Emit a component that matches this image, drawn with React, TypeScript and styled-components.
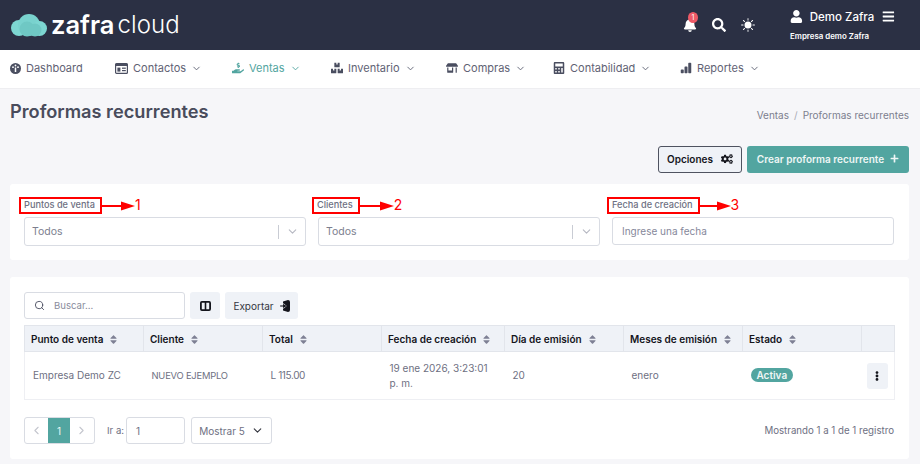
import React from "react";
import styled, { createGlobalStyle } from "styled-components";
import {
  FaHandHoldingUsd, FaBoxes, FaStoreAlt, FaCalculator,
  FaBell, FaSearch, FaUser, FaBars, FaCogs, FaPlus, FaEllipsisV, FaSort,
} from "react-icons/fa";
import { BsBarChartFill, BsSunFill } from "react-icons/bs";
import { ChevronDown, ChevronLeft, ChevronRight, Search } from "lucide-react";

const Global = createGlobalStyle`
  html, body { margin: 0; padding: 0; height: 100%; overflow: hidden; background: #f6f6f9; }
  body { font-family: Inter, "Noto Sans", sans-serif; color: #6b6e80; }
  * { box-sizing: border-box; }
`;

const Header = styled.header`
  height: 50px; background: #2b3044; display: flex; align-items: center; justify-content: space-between; padding: 0 25px 0 11px; color: #fff;
`;
const Logo = styled.div`display: flex; align-items: center;`;
const LogoWord = styled.span<{ $light?: boolean }>`
  font-size: ${p => (p.$light ? 24 : 25.5)}px; line-height: 30px; font-weight: ${p => (p.$light ? 300 : 600)}; color: #fff;
  margin-left: ${p => (p.$light ? 3 : 4)}px; letter-spacing: ${p => (p.$light ? 0.1 : 0)}px;
`;
const HeaderRight = styled.div`display: flex; align-items: center;`;
const IconSlot = styled.div`position: relative; display: flex; margin-right: 15px; font-size: 14px; color: #fff;`;
const Badge = styled.span`
  position: absolute; top: -6px; left: 5px; width: 10px; height: 11px; border-radius: 50%; background: #ee5a67; color: #fff; font-size: 7px; line-height: 11px; text-align: center;
`;
const UserBlock = styled.div`display: flex; flex-direction: column; margin-left: 20px; width: 105px;`;
const UserRow = styled.div`display: flex; align-items: center; font-size: 11.5px; line-height: 16px; color: #fff; font-weight: 500;`;
const UserName = styled.span`margin: 0 8px 0 7px; white-space: nowrap;`;
const Company = styled.div`font-size: 7.9px; line-height: 11px; font-weight: 600; margin-top: 6px; color: #fff; white-space: nowrap;`;

const Nav = styled.nav`
  height: 39px; background: #fff; display: flex; align-items: center; padding: 0 0 2px 10px; border-bottom: 1px solid #eeeef1;
`;
const NavItem = styled.div<{ $w: number; $active?: boolean }>`
  width: ${p => p.$w}px; display: flex; align-items: center; gap: 5px; font-size: 11px; color: ${p => (p.$active ? "#52a5a0" : "#5f6274")}; white-space: nowrap;
  svg.main { font-size: 12px; color: ${p => (p.$active ? "#52a5a0" : "#4a4e60")}; }
`;

const Main = styled.main`padding: 0 11px 0 10px;`;
const TitleRow = styled.div`display: flex; justify-content: space-between; align-items: center; height: 48px;`;
const Title = styled.h1`margin: 0 0 4px; font-size: 18.2px; font-weight: 600; color: #494c5c;`;
const Crumbs = styled.div`font-size: 10px; color: #7c7e8e; white-space: nowrap; padding-top: 4px;`;
const CrumbSep = styled.span`margin: 0 5px; color: #a8aab6;`;
const Actions = styled.div`display: flex; justify-content: flex-end; gap: 5px; margin-top: 9px;`;
const OptionsBtn = styled.button`
  height: 27px; width: 84px; font: 600 10px Inter, sans-serif; color: #14151c; background: #eff2f7; border: 1px solid #4f5360; border-radius: 3px;
  display: flex; align-items: center; justify-content: center; gap: 8px; padding: 0 0 2px;
`;
const CreateBtn = styled.button`
  height: 27px; width: 162px; font: 600 10px Inter, sans-serif; color: #eef6f5; background: #52a5a0; border: none; border-radius: 3px;
  display: flex; align-items: center; justify-content: center; gap: 6px; padding: 0 0 2px; white-space: nowrap;
`;

const Card = styled.section`background: #fff; border-radius: 3px; padding: 0 15px 0 14px;`;
const FilterCard = styled(Card)`
  margin-top: 11px; height: 76px; display: grid; grid-template-columns: repeat(3, 282px); column-gap: 12px; padding-top: 13px;
`;
const Field = styled.div`display: flex; flex-direction: column;`;
const LabelRow = styled.div<{ $shift?: number }>`height: 17px; margin: 0 0 3px ${p => p.$shift ?? -5}px; display: flex; align-items: center;`;
const Marked = styled.span`
  display: block; border: 2px solid #f00; height: 17px; padding: 0 5px 0 3px; font-size: 9.2px; line-height: 12px; color: #6e7082; white-space: nowrap; font-weight: 500;
`;
const Num = styled.span`color: #f00; font-size: 14px; font-weight: 400; line-height: 16px; margin-top: -2px;`;
const Select = styled.div`
  height: 29px; border: 1px solid #d9dce3; border-radius: 3px; display: flex; align-items: center; padding-left: 7px; font-size: 10.5px; color: #7c7e8e; background: #fff;
`;
const SelectText = styled.span`flex: 1;`;
const SelectDivider = styled.span`width: 1px; height: 14px; background: #c9ccd4;`;
const SelectChevron = styled.span`width: 26px; display: flex; justify-content: center; color: #b6b8c2;`;
const DateInput = styled.div`
  height: 28px; border: 1px solid #d9dce3; border-radius: 3px; display: flex; align-items: center; padding-left: 9px; font-size: 10px; color: #85879a;
`;

const TableCard = styled(Card)`margin-top: 17px; height: 182px; padding-top: 15px;`;
const Toolbar = styled.div`display: flex; gap: 5px; height: 27px; margin-bottom: 6px;`;
const SearchBox = styled.div`
  width: 161px; border: 1px solid #d9dce3; border-radius: 3px; display: flex; align-items: center; gap: 9px; padding-left: 9px; font-size: 9.6px; color: #8a8c9c;
  svg { color: #4a4e60; }
`;
const ToolBtn = styled.div<{ $w: number }>`
  width: ${p => p.$w}px; background: #eff2f7; border-radius: 3px; display: flex; align-items: center; justify-content: center; gap: 6px; font-size: 10px; color: #34363f;
`;
const Table = styled.table`
  width: 870px; border-collapse: collapse; table-layout: fixed; border: 1px solid #eeeff3;
`;
const Th = styled.th<{ $w: number }>`
  width: ${p => p.$w}px; height: 26px; padding: 0 0 0 6px; background: #eff2f7; border: 1px solid #e2e5eb; text-align: left; font-size: 10px; font-weight: 600; color: #14151c; white-space: nowrap;
  svg { color: #7e8094; font-size: 11px; margin-left: 5px; vertical-align: -2px; }
`;
const Td = styled.td<{ $size?: number; $track?: number }>`
  height: 48px; padding: 0 0 0 8px; font-size: ${p => p.$size ?? 10}px; letter-spacing: ${p => p.$track ?? 0}px; line-height: 15px; color: #6e7082;
`;
const ActionTd = styled(Td)`padding-left: 5px;`;
const Pill = styled.span`
  display: inline-block; background: #52a5a0; color: #eef6f5; font-size: 10px; font-weight: 600; line-height: 14px; padding: 0 6px; border-radius: 8px;
`;
const DotsBtn = styled.div`
  width: 21px; height: 26px; background: #eff2f7; border-radius: 3px; display: flex; align-items: center; justify-content: center; color: #14151c; font-size: 10px;
`;
const Footer = styled.div`display: flex; align-items: center; margin-top: 17px;`;
const Pager = styled.div`display: flex; height: 27px; width: 71px; border: 1px solid #d9dce3; border-radius: 3px; overflow: hidden;`;
const PageArrow = styled.span`width: 23px; display: flex; align-items: center; justify-content: center; color: #c4c6ce;`;
const PageNum = styled.span`width: 22px; background: #52a5a0; color: #eef6f5; font-size: 10px; display: flex; align-items: center; justify-content: center;`;
const GoLabel = styled.span`font-size: 9.6px; margin: 0 2px 0 12px; color: #6e7082;`;
const GoInput = styled.div`
  width: 59px; height: 27px; border: 1px solid #d9dce3; border-radius: 3px; font-size: 10px; display: flex; align-items: center; padding-left: 9px; color: #6e7082;
`;
const ShowSelect = styled.div`
  width: 81px; height: 27px; margin-left: 6px; border: 1px solid #d9dce3; border-radius: 3px; font-size: 10px; display: flex; align-items: center; justify-content: center; gap: 6px; color: #6e7082; white-space: nowrap;
  svg { color: #34363f; }
`;
const Showing = styled.span`margin-left: auto; font-size: 9.7px; color: #6e7082;`;

const Arrow = ({ w }: { w: number }) => (
  <svg width={w} height="10" viewBox={`0 0 ${w} 10`} style={{ flex: "none" }}>
    <rect x="0" y="4" width={w - 12} height="2" fill="#f00" />
    <polygon points={`${w - 14},0.5 ${w},5 ${w - 14},9.5`} fill="#f00" />
  </svg>
);

const CloudLogo = () => (
  <svg width="36" height="23" viewBox="0 0 36 23">
    <circle cx="8" cy="14" r="8" fill="#7dd6d2" />
    <circle cx="18" cy="11" r="11" fill="#79d2ce" />
    <circle cx="28.5" cy="14.5" r="7.5" fill="#7dd6d2" />
    <circle cx="16" cy="15" r="7.5" fill="#6fc8c4" />
    <circle cx="24" cy="16" r="6.5" fill="#6fc8c4" />
  </svg>
);

const GaugeIcon = () => (
  <svg className="main" width="11" height="11" viewBox="0 0 11 11">
    <circle cx="5.5" cy="5.5" r="5.5" fill="currentColor" />
    <circle cx="3" cy="4.2" r="0.9" fill="#fff" />
    <circle cx="5.5" cy="2.5" r="0.9" fill="#fff" />
    <circle cx="8" cy="4.2" r="0.9" fill="#fff" />
    <path d="M5.5 4.5V9" stroke="#fff" strokeWidth="1.5" />
  </svg>
);

const ContactCardIcon = () => (
  <svg className="main" width="13" height="11" viewBox="0 0 13 11">
    <rect x="0.6" y="0.6" width="11.8" height="9.8" rx="1" fill="none" stroke="currentColor" strokeWidth="1.2" />
    <rect x="0.6" y="0.6" width="11.8" height="2.4" fill="currentColor" />
    <rect x="2.4" y="4.6" width="3" height="4" fill="currentColor" />
    <rect x="7" y="4.6" width="3.8" height="1.2" fill="currentColor" />
    <rect x="7" y="7" width="3.8" height="1.2" fill="currentColor" />
  </svg>
);

const ColumnsIcon = () => (
  <svg width="11" height="10" viewBox="0 0 11 10">
    <rect x="0.9" y="0.9" width="9.2" height="8.2" rx="1" fill="none" stroke="#14151c" strokeWidth="1.8" />
    <rect x="4.7" y="1" width="1.6" height="8" fill="#14151c" />
  </svg>
);

const ExportIcon = () => (
  <svg width="10" height="12" viewBox="0 0 10 12">
    <path d="M3 1.5 L8 0 Q10 0 10 2 V10 Q10 12 8 12 L3 10.5 V8 H5 V4 H3 Z" fill="#14151c" />
    <path d="M0 5.2 H3 V3.2 L6.5 6 L3 8.8 V6.8 H0 Z" fill="#14151c" stroke="#eff2f7" strokeWidth="0.4" />
  </svg>
);

const navItems: { label: string; icon: React.ReactNode; w: number; active?: boolean; caret?: boolean }[] = [
  { label: "Dashboard", icon: <GaugeIcon />, w: 105 },
  { label: "Contactos", icon: <ContactCardIcon />, w: 117, caret: true },
  { label: "Ventas", icon: <FaHandHoldingUsd className="main" />, w: 99, active: true, caret: true },
  { label: "Inventario", icon: <FaBoxes className="main" />, w: 115, caret: true },
  { label: "Compras", icon: <FaStoreAlt className="main" />, w: 107, caret: true },
  { label: "Contabilidad", icon: <FaCalculator className="main" />, w: 127, caret: true },
  { label: "Reportes", icon: <BsBarChartFill className="main" />, w: 90, caret: true },
];

const cols: [string, number][] = [
  ["Punto de venta", 119], ["Cliente", 119], ["Total", 119], ["Fecha de creación", 123],
  ["Día de emisión", 119], ["Meses de emisión", 119], ["Estado", 119],
];

export default function App() {
  return (
    <>
      <Global />
      <Header>
        <Logo>
          <CloudLogo />
          <LogoWord>zafra</LogoWord>
          <LogoWord $light>cloud</LogoWord>
        </Logo>
        <HeaderRight>
          <IconSlot><FaBell /><Badge>1</Badge></IconSlot>
          <IconSlot><FaSearch /></IconSlot>
          <IconSlot><BsSunFill /></IconSlot>
          <UserBlock>
            <UserRow><FaUser size={13} /><UserName>Demo Zafra</UserName><FaBars size={13} /></UserRow>
            <Company>Empresa demo Zafra</Company>
          </UserBlock>
        </HeaderRight>
      </Header>
      <Nav>
        {navItems.map(n => (
          <NavItem key={n.label} $w={n.w} $active={n.active}>
            {n.icon}
            <span>{n.label}</span>
            {n.caret && <ChevronDown size={11} />}
          </NavItem>
        ))}
      </Nav>
      <Main>
        <TitleRow>
          <Title>Proformas recurrentes</Title>
          <Crumbs>Ventas<CrumbSep>/</CrumbSep>Proformas recurrentes</Crumbs>
        </TitleRow>
        <Actions>
          <OptionsBtn>Opciones <FaCogs size={12} /></OptionsBtn>
          <CreateBtn>Crear proforma recurrente <FaPlus size={9} /></CreateBtn>
        </Actions>
        <FilterCard>
          <Field>
            <LabelRow><Marked>Puntos de venta</Marked><Arrow w={33} /><Num>1</Num></LabelRow>
            <Select><SelectText>Todos</SelectText><SelectDivider /><SelectChevron><ChevronDown size={13} /></SelectChevron></Select>
          </Field>
          <Field>
            <LabelRow $shift={-6}><Marked>Clientes</Marked><Arrow w={34} /><Num>2</Num></LabelRow>
            <Select><SelectText>Todos</SelectText><SelectDivider /><SelectChevron><ChevronDown size={13} /></SelectChevron></Select>
          </Field>
          <Field>
            <LabelRow><Marked>Fecha de creación</Marked><Arrow w={31} /><Num>3</Num></LabelRow>
            <DateInput>Ingrese una fecha</DateInput>
          </Field>
        </FilterCard>
        <TableCard>
          <Toolbar>
            <SearchBox><Search size={11} />Buscar...</SearchBox>
            <ToolBtn $w={30}><ColumnsIcon /></ToolBtn>
            <ToolBtn $w={73}>Exportar <ExportIcon /></ToolBtn>
          </Toolbar>
          <Table>
            <thead>
              <tr>
                {cols.map(([c, w]) => <Th key={c} $w={w}>{c}<FaSort /></Th>)}
                <Th $w={33} />
              </tr>
            </thead>
            <tbody>
              <tr>
                <Td>Empresa Demo ZC</Td>
                <Td $size={9.4} $track={-0.2}>NUEVO EJEMPLO</Td>
                <Td $track={-0.4}>L 115.00</Td>
                <Td>19 ene 2026, 3:23:01<br />p. m.</Td>
                <Td>20</Td>
                <Td>enero</Td>
                <Td><Pill>Activa</Pill></Td>
                <ActionTd><DotsBtn><FaEllipsisV /></DotsBtn></ActionTd>
              </tr>
            </tbody>
          </Table>
          <Footer>
            <Pager>
              <PageArrow><ChevronLeft size={13} /></PageArrow>
              <PageNum>1</PageNum>
              <PageArrow><ChevronRight size={13} /></PageArrow>
            </Pager>
            <GoLabel>Ir a:</GoLabel>
            <GoInput>1</GoInput>
            <ShowSelect>Mostrar 5 <ChevronDown size={13} /></ShowSelect>
            <Showing>Mostrando 1 a 1 de 1 registro</Showing>
          </Footer>
        </TableCard>
      </Main>
    </>
  );
}
